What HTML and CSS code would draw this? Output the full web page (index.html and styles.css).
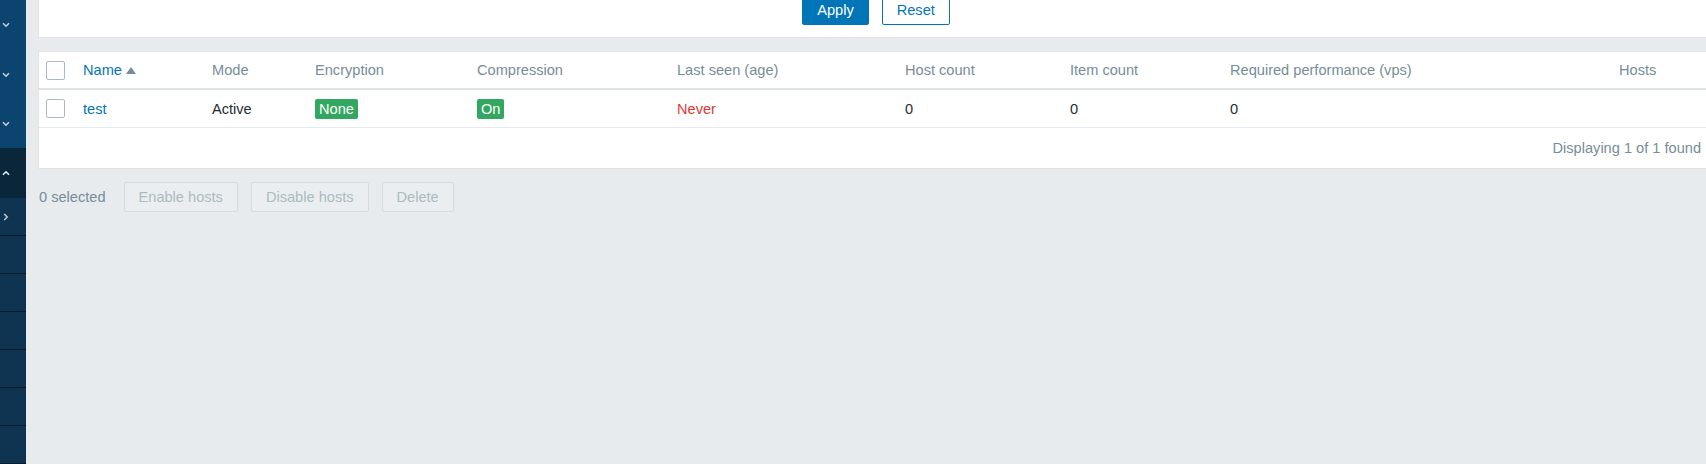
FILE: index.html
```html
<!DOCTYPE html>
<html>
<head>
<meta charset="utf-8">
<title>Proxies</title>
<link rel="stylesheet" href="styles.css">
</head>
<body>
<nav class="sidebar">
  <div class="nav-item"><svg class="chev" viewBox="0 0 8 6" width="8" height="6"><path d="M1 1.2 L4 4.2 L7 1.2" fill="none" stroke="#c3d0d9" stroke-width="1.6"/></svg></div>
  <div class="nav-item"><svg class="chev" viewBox="0 0 8 6" width="8" height="6"><path d="M1 1.2 L4 4.2 L7 1.2" fill="none" stroke="#c3d0d9" stroke-width="1.6"/></svg></div>
  <div class="nav-item"><svg class="chev" viewBox="0 0 8 6" width="8" height="6"><path d="M1 1.2 L4 4.2 L7 1.2" fill="none" stroke="#c3d0d9" stroke-width="1.6"/></svg></div>
  <div class="nav-item nav-open"><svg class="chev" viewBox="0 0 8 6" width="8" height="6"><path d="M1 4.8 L4 1.8 L7 4.8" fill="none" stroke="#e6ecf0" stroke-width="1.6"/></svg></div>
  <div class="sub-item"><svg class="chev-r" viewBox="0 0 6 8" width="6" height="8"><path d="M1.2 1 L4.2 4 L1.2 7" fill="none" stroke="#b9c6cf" stroke-width="1.6"/></svg></div>
  <div class="sub-item"></div>
  <div class="sub-item"></div>
  <div class="sub-item"></div>
  <div class="sub-item"></div>
  <div class="sub-item"></div>
  <div class="sub-item"></div>
</nav>
<main class="main">
  <div class="filter">
    <button class="btn btn-primary">Apply</button>
    <button class="btn btn-alt">Reset</button>
  </div>
  <div class="list">
    <table class="list-table">
      <colgroup>
        <col style="width:37px"><col style="width:129px"><col style="width:103px"><col style="width:162px"><col style="width:200px"><col style="width:228px"><col style="width:165px"><col style="width:160px"><col style="width:389px"><col>
      </colgroup>
      <thead>
        <tr>
          <th><span class="checkbox"></span></th>
          <th><a class="link sort">Name</a><span class="arrow-up"></span></th>
          <th>Mode</th>
          <th>Encryption</th>
          <th>Compression</th>
          <th>Last seen (age)</th>
          <th>Host count</th>
          <th>Item count</th>
          <th>Required performance (vps)</th>
          <th>Hosts</th>
        </tr>
      </thead>
      <tbody>
        <tr>
          <td><span class="checkbox"></span></td>
          <td><a class="link">test</a></td>
          <td>Active</td>
          <td><span class="badge">None</span></td>
          <td><span class="badge">On</span></td>
          <td class="red">Never</td>
          <td>0</td>
          <td>0</td>
          <td>0</td>
          <td></td>
        </tr>
      </tbody>
    </table>
    <div class="paging">Displaying 1 of 1 found</div>
  </div>
  <div class="actions">
    <span class="selected">0 selected</span>
    <button class="btn btn-disabled">Enable hosts</button>
    <button class="btn btn-disabled">Disable hosts</button>
    <button class="btn btn-disabled">Delete</button>
  </div>
</main>
</body>
</html>
```
FILE: styles.css
```css
html, body {
  margin: 0;
  padding: 0;
  height: 100%;
  overflow: hidden;
}
body {
  display: flex;
  background: #e8ebee;
  font-family: "Liberation Sans", Arial, sans-serif;
  font-size: 14.6px;
  color: #1f2c33;
}
.sidebar {
  flex: none;
  width: 26px;
  height: 100vh;
  background: #0e3452;
  display: flex;
  flex-direction: column;
}
.nav-item {
  height: 50px;
  flex: none;
  background: #0c4470;
  display: flex;
  align-items: center;
  padding-left: 2px;
}
.nav-item:nth-child(3) {
  height: 48px;
}
.nav-item.nav-open {
  background: #0a263b;
}
.chev, .chev-r {
  display: block;
}
.sub-item {
  height: 37px;
  flex: none;
  background: #0e3452;
  border-bottom: 1.5px solid #071a29;
  display: flex;
  align-items: center;
  padding-left: 3px;
}
.main {
  flex: none;
  width: 1670px;
  padding-left: 12px;
}
.filter {
  margin-top: -16px;
  background: #fff;
  border: 1px solid #dfe4e7;
  border-top: none;
  padding: 12px 0 12px 6px;
  display: flex;
  justify-content: center;
  gap: 13px;
}
.btn {
  font-family: inherit;
  font-size: 14.6px;
  height: 29px;
  padding: 0 14px;
  border-radius: 2px;
  border: 1px solid #0275b8;
  line-height: 27px;
  box-sizing: border-box;
  cursor: pointer;
}
.btn-primary {
  background: #0275b8;
  color: #fff;
}
.btn-alt {
  background: #fff;
  color: #0275b8;
}
.list {
  margin-top: 13px;
  background: #fff;
  border: 1px solid #dfe4e7;
}
.list-table {
  width: 100%;
  table-layout: fixed;
  border-collapse: collapse;
}
.list-table th, .list-table td {
  text-align: left;
  padding: 0 0 0 7px;
  white-space: nowrap;
  vertical-align: middle;
}
.list-table th {
  height: 36px;
  font-weight: normal;
  color: #768d99;
  border-bottom: 2px solid #dde2e5;
}
.list-table td {
  height: 37px;
  border-bottom: 1px solid #e6e9eb;
}
.checkbox {
  display: block;
  width: 17px;
  height: 17px;
  border: 1px solid #acbbc2;
  border-radius: 2px;
  background: #fff;
}
.link {
  color: #0275b8;
  text-decoration: none;
}
.arrow-up {
  display: inline-block;
  width: 0;
  height: 0;
  margin-left: 4px;
  border-left: 5px solid transparent;
  border-right: 5px solid transparent;
  border-bottom: 7px solid #768d99;
  vertical-align: 1px;
}
.badge {
  display: inline-block;
  background: #32a75f;
  color: #fff;
  padding: 0 4px;
  line-height: 20px;
  border-radius: 2px;
}
.red {
  color: #e33734;
}
.paging {
  height: 40px;
  display: flex;
  align-items: center;
  justify-content: flex-end;
  padding-right: 6px;
  color: #768d99;
}
.actions {
  margin-top: 13px;
  display: flex;
  align-items: center;
  gap: 13px;
}
.selected {
  color: #768d99;
  margin-left: 1px;
  margin-right: 5px;
}
.btn-disabled {
  background: #ebeef0;
  border-color: #d6dbde;
  color: #acbbc2;
  height: 30px;
}
```
